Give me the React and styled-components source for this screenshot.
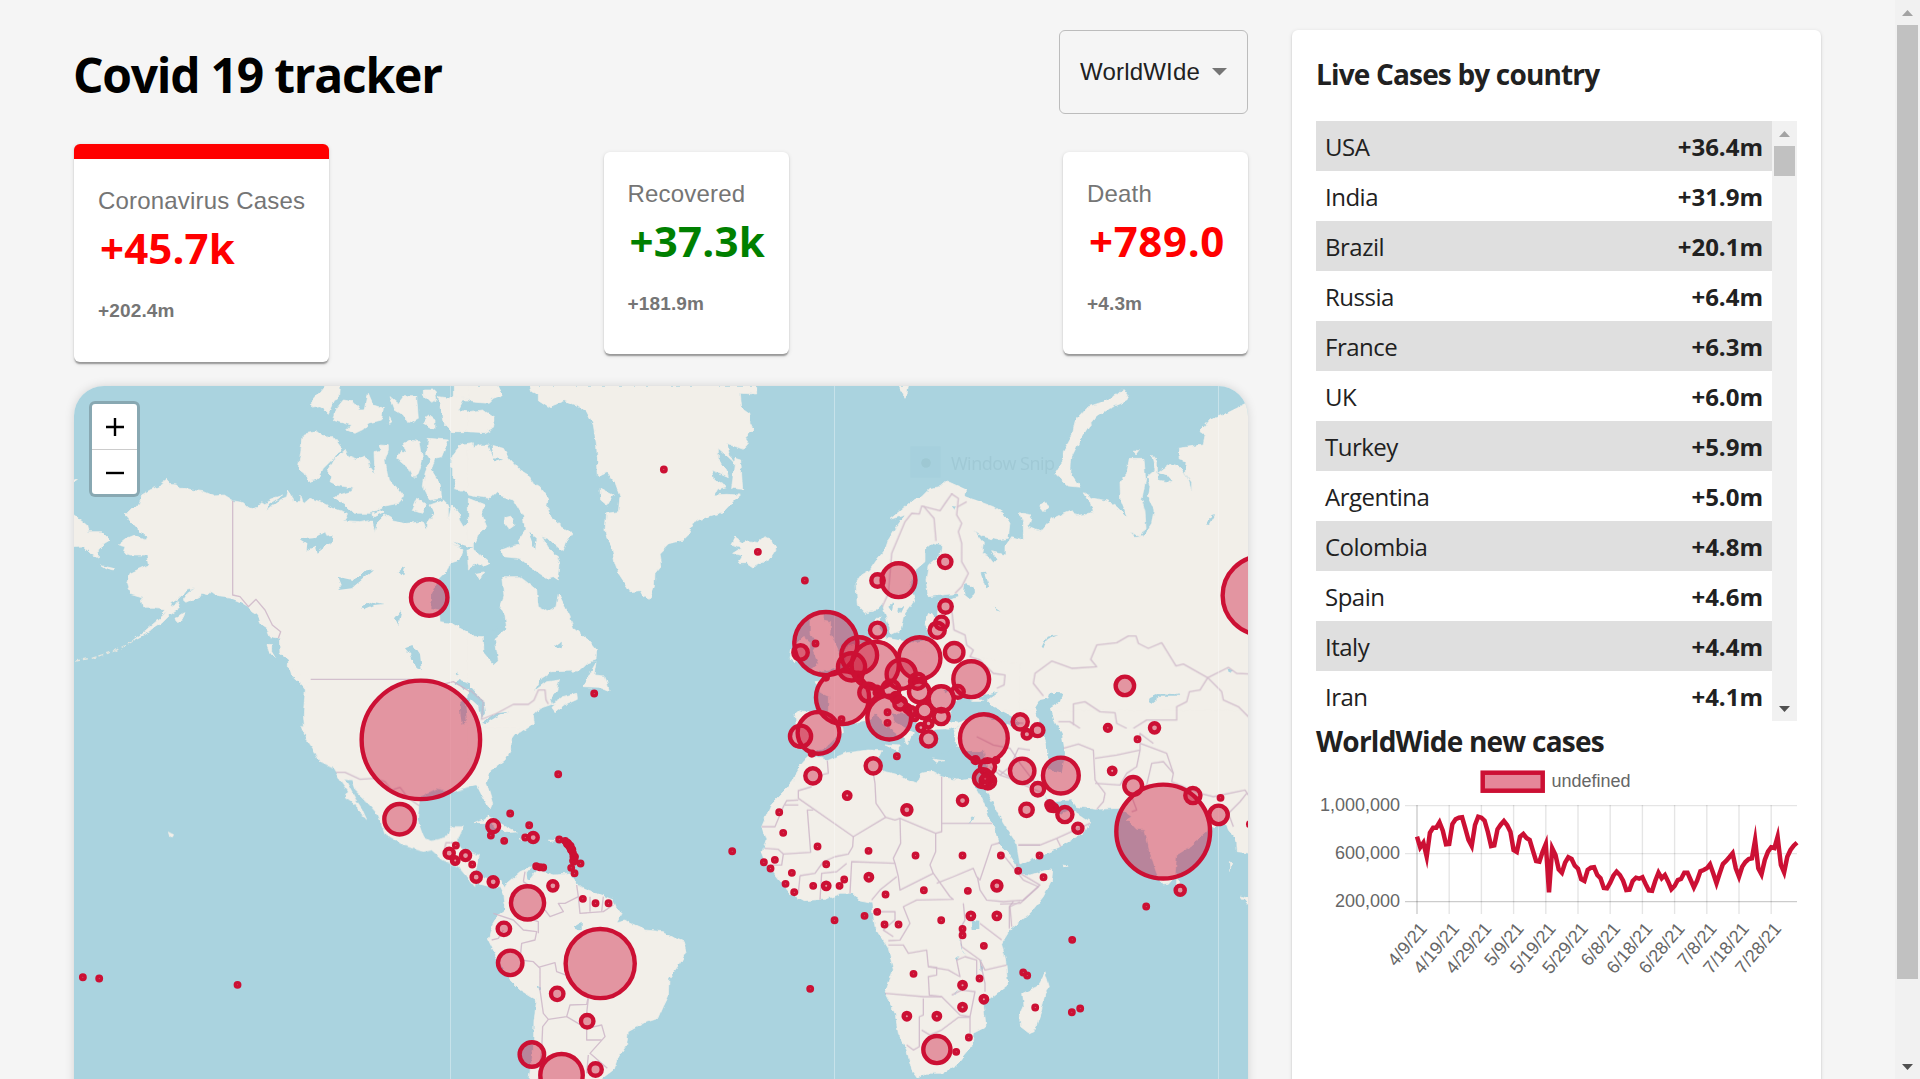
import React from "react";
import styled, { createGlobalStyle } from "styled-components";

const Global = createGlobalStyle`
  * { box-sizing: border-box; }
  html, body { margin: 0; height: 1079px; overflow: hidden; background: #f5f5f5; }
`;
const ui = `"Segoe UI", "Open Sans", "Noto Sans", sans-serif`;
const arial = `"Liberation Sans", Arial, sans-serif`;
const RED = "#cc1034";

const Page = styled.div`
  display: flex; width: 1920px; height: 1079px; overflow: hidden; background: #f5f5f5; font-family: ${ui};
`;
const Content = styled.main`
  flex: 1; display: flex; gap: 44px; padding: 30px 74px 0; align-items: flex-start;
`;
const Left = styled.section`width: 1174px; display: flex; flex-direction: column;`;
const Header = styled.header`display: flex; justify-content: space-between; height: 84px;`;
const Title = styled.h1`
  margin: 13px 0 0 -1px; font-size: 48px; line-height: 64px; font-weight: 700; color: #000; letter-spacing: ${(p) => p.$ls || 0}px; white-space: nowrap;
`;
const Select = styled.button`
  width: 189px; height: 84px; border: 1px solid #bcbcbc; border-radius: 6px; background: transparent;
  padding: 0 20px; display: flex; align-items: center; justify-content: space-between;
  font: 24px/28px ${arial}; color: #212121; letter-spacing: .2px;
`;
const Stats = styled.div`
  display: flex; justify-content: space-between; align-items: center; height: 218px; margin-top: 30px;
`;
const Card = styled.article`
  width: ${(p) => p.$w}px; height: ${(p) => (p.$active ? 218 : 202)}px; background: #fff; border-radius: 6px; padding: 26px 24px 0;
  border-top: ${(p) => (p.$active ? "15px solid #f00" : "0")};
  box-shadow: 0 3px 1.5px -1.5px rgba(0,0,0,.2), 0 1.5px 1.5px rgba(0,0,0,.14), 0 1.5px 4.5px rgba(0,0,0,.12);
`;
const CardLabel = styled.div`font: 24px/32px ${arial}; color: #757575; letter-spacing: .18px; white-space: nowrap;`;
const CardValue = styled.div`
  font-size: 42px; line-height: 56px; font-weight: 700; color: ${(p) => p.$color}; letter-spacing: ${(p) => p.$ls}px; margin: 3px 0 0 2px; white-space: nowrap;
`;
const CardTotal = styled.div`font: 700 19px/28px ${arial}; color: #757575; margin-top: 21px; letter-spacing: .15px;`;
const MapBox = styled.div`
  position: relative; height: 750px; border-radius: 30px; overflow: hidden; background: #aad3df;
`;
const MapShadow = styled.div`border-radius: 30px; box-shadow: 0 0 12px -2px rgba(0,0,0,.2); margin-top: 24px;`;
const ZoomControl = styled.div`
  position: absolute; left: 15px; top: 15px; width: 51px; height: 96px; border: 3px solid rgba(0,0,0,.2); border-radius: 6px;
  background: #fff; background-clip: padding-box; display: flex; flex-direction: column;
`;
const ZoomButton = styled.button`
  flex: 1; border: 0; background: transparent; padding: 2px 0 0; display: grid; place-items: center;
  & + & { border-top: 1px solid #ccc; }
`;
const Sidebar = styled.aside`
  width: 529px; height: 1100px; background: #fff; border-radius: 6px; padding: 24px 24px 0;
  box-shadow: 0 3px 1.5px -1.5px rgba(0,0,0,.2), 0 1.5px 1.5px rgba(0,0,0,.14), 0 1.5px 4.5px rgba(0,0,0,.12);
`;
const SideTitle = styled.h3`
  margin: ${(p) => p.$m}; font-size: 28px; line-height: 40px; font-weight: 700; color: #212121; letter-spacing: ${(p) => p.$ls}px; white-space: nowrap;
`;
const ListFrame = styled.div`display: flex; height: 600px;`;
const Rows = styled.div`flex: 1;`;
const Row = styled.div`
  display: flex; justify-content: space-between; align-items: center; height: 50px; padding: 1px 9px 0; font-size: 24px; line-height: 32px;
  color: #212121; &:nth-child(odd) { background: #dfdfdf; }
`;
const Country = styled.span`letter-spacing: -.5px;`;
const Count = styled.strong`letter-spacing: 0;`;
const Track = styled.div`
  width: 25px; height: ${(p) => p.$h}px; background: #f1f1f1; display: flex; flex-direction: column; align-items: center; flex: none;
`;
const Arrow = styled.div`
  height: 25px; width: 25px; display: grid; place-items: center; margin-top: ${(p) => (p.$down ? "auto" : 0)};
`;
const Thumb = styled.div`width: 21px; height: ${(p) => p.$h}px; background: #c1c1c1;`;
const Chart = styled.svg`display: block; overflow: visible;`;

const Scrollbar = ({ h, thumb }) => (
  <Track $h={h}>
    <Arrow><svg width="11" height="6"><path d="M5.5 0L11 6H0z" fill="#a3a3a3" /></svg></Arrow>
    <Thumb $h={thumb} />
    <Arrow $down><svg width="11" height="6"><path d="M0 0H11L5.5 6z" fill="#505050" /></svg></Arrow>
  </Track>
);

/* Map sheets: each has an origin on the map plane and is drawn at a third of its units. */
const LAND = [
  [70, 380, [
    "165,405 190,380 205,378 215,345 240,330 265,320 275,308 290,298 300,310 320,312 328,325 345,325 365,330 400,335 430,348 460,345 488,362 520,368 535,382 555,388 575,365 590,375 600,358 638,345 600,370 585,392 620,365 650,350 655,330 668,350 672,365 690,368 693,345 700,372 720,355 750,365 790,385 835,400 820,425 870,428 905,420 915,458 920,430 945,405 970,420 1010,430 1060,425 1070,450 1075,425 1095,400 1080,375 1120,360 1135,375 1135,420 1145,375 1165,400 1168,420 1180,440 1210,415 1210,560 1195,555 1190,500 1170,500 1145,488 1180,510 1170,540 1140,550 1130,575 1105,600 1085,640 1083,685 1108,690 1110,725 1145,730 1170,745 1210,765 1210,1060 705,1060 700,1000 706,930 695,905 655,865 655,840 630,820 628,775 600,770 590,745 575,735 560,705 545,695 535,680 510,665 485,655 445,650 425,635 415,645 395,640 385,655 350,670 340,660 360,630 375,622 350,628 330,655 305,670 300,690 270,705 285,690 250,685 222,685 215,650 180,640 170,610 180,580 205,568 235,555 230,525 180,525 160,515 165,500 145,495 170,475 195,465 225,480 230,470 195,440",
    "330,665 322,690 300,705 275,730 250,745 225,762 190,780 210,765 240,740 275,710 300,685", "345,695 340,715 320,728 315,715",
    "0,395 50,435 55,455 95,455 120,480 100,492 85,510 85,535 60,520 40,498 0,500", "95,557 130,565 128,573 108,566",
    "700,162 740,155 775,170 790,170 815,205 790,235 760,265 745,295 718,305 705,280 685,265 692,215",
    "825,210 835,230 860,240 885,228 895,240 900,260 915,280 912,215 935,210 930,195 955,197 955,210 945,240 955,300 980,325 1000,350 985,370 935,380 900,400 850,400 825,375 790,350 840,335 850,325 800,315 780,305 785,290 770,275 790,240",
    "1000,190 1020,180 1050,185 1058,240 1045,280 1030,295 1015,265 980,235 990,215 1010,220", "1075,175 1135,180 1115,230 1095,235 1085,268 1110,310 1115,355 1080,360 1060,320 1065,280 1080,240 1070,225",
    "1210,188 1175,192 1155,215 1145,240 1145,290 1160,310 1150,325 1210,345",
    "765,18 808,18 805,55 790,65 775,100 765,90 750,80 725,85 725,65", "820,60 850,65 870,90 885,90 895,40 910,75 940,85 935,120 895,130 880,148 855,160 830,150 845,135 790,122 800,85",
    "960,50 985,70 1000,50 1040,50 1045,115 1015,130 1000,105 975,90", "1060,30 1095,30 1100,60 1085,70 1060,45", "1075,105 1095,120 1095,150 1060,130", "1105,50 1140,55 1155,45 1210,60 1180,60 1165,90 1210,100 1210,155 1145,155 1120,130", "1150,18 1210,18 1210,60 1150,45",
    "1040,355 1070,375 1055,400 1025,390", "960,112 967,125 955,130", "935,390 945,395 915,410 905,402", "658,860 685,880 705,895 725,925 700,918 665,885", "590,795 605,797 605,815 617,835 600,822",
    "10,295 20,300 10,308"]],
  [470, 380, [
    "-5,210 30,195 60,195 100,205 118,235 150,270 175,285 185,305 210,320 235,355 230,380 245,415 275,440 308,460 290,485 280,515 262,500 250,490 235,475 215,470 240,510 260,525 270,555 265,600 250,590 230,595 180,560 150,535 100,530 95,510 120,500 150,495 145,480 165,450 160,410 130,360 95,350 80,335 60,355 20,350 -5,345",
    "-5,18 85,18 98,45 70,55 55,70 0,65", "-5,95 40,90 75,115 70,145 45,158 -5,155", "-5,355 45,375 35,400 50,440 30,460 20,485 -5,480", "-5,500 20,515 60,550 40,560 20,550 -5,570", "105,410 125,405 132,435 115,447 103,430", "20,580 45,575 30,597",
    "180,18 185,35 205,45 205,62 235,82 285,62 330,80 350,95 370,135 380,200 385,290 410,278 435,310 450,350 445,395 410,400 405,450 412,480 425,500 435,550 450,590 480,635 510,632 520,650 538,658 553,620 555,580 575,555 570,520 600,490 640,480 655,465 668,430 690,418 760,395 808,345 770,343 730,345 740,328 770,320 730,300 725,268 775,290 770,270 745,235 745,205 785,240 810,270 780,230 770,190 820,208 835,190 825,175 850,150 840,130 840,100 812,80 808,40 860,42 860,18",
    "795,235 812,240 818,328 785,325", "390,325 430,345 410,375 392,360", "783,495 795,470 820,488 835,482 865,488 885,470 905,478 918,508 900,535 850,562 830,548 805,548 818,528 788,520 812,505",
    "95,590 150,590 200,630 205,680 232,695 258,680 265,640 300,710 310,745 355,780 380,810 378,840 350,850 325,873 245,875 215,895 190,935 230,905 268,900 260,930 240,955 245,970 280,950 320,940 322,958 285,975 255,998 245,985 255,970 210,985 190,1005 193,1030 150,1060 -5,1060 -5,768 40,770 42,820 70,853 85,840 75,775 110,745 105,705 90,685 102,650",
    "340,920 360,880 378,848 372,885 405,888 418,935 385,922"]],
  [850, 380, [
    "18,610 35,585 60,570 80,540 105,510 115,480 140,440 165,405 120,418 165,380 195,355 215,350 240,325 270,320 290,303 350,330 345,350 375,360 430,380 460,400 480,430 475,475 440,480 395,468 370,450 400,490 395,520 415,530 430,548 440,538 425,515 465,525 465,500 485,470 520,480 520,430 508,398 545,405 535,440 570,455 600,420 640,400 665,390 680,410 705,405 730,395 720,365 700,335 730,355 770,362 800,380 832,412 812,360 810,310 830,280 838,235 882,235 887,300 875,360 885,395 888,440 870,470 840,455 855,472 880,470 905,430 912,390 895,350 900,320 892,290 915,270 905,225 922,245 922,300 970,308 950,285 925,275 960,250 990,260 1015,300 1025,335 1025,310 1005,280 1008,245 988,240 985,205 1060,195 1065,165 1050,155 1080,120 1130,100 1190,70 1210,60 1210,1070 490,1070 490,1000 0,1000 -20,960 -10,800 40,790 65,780 55,740 90,708 88,745 110,775 200,790 245,775 225,735 235,700 262,715 265,665 330,652 322,640 235,650 228,600 235,555 275,520 278,495 250,488 225,510 225,545 190,575 180,620 195,660 165,700 155,750 125,763 110,715 97,670 80,690 45,700 22,675",
    "820,26 835,45 825,65 780,85 740,110 715,140 690,180 665,230 662,280 690,322 655,318 630,295 615,280 640,240 640,215 665,170 675,125 715,80 760,65 800,45", "148,18 175,18 172,40 165,52", "570,380 582,368 595,380 582,395", "850,210 868,212 858,225"]],
  [780, 580, [
    "90,115 130,95 130,120 152,125 150,160 170,200 188,240 175,265 105,278 85,275 115,250 100,215 112,190 90,160", "35,205 70,170 90,185 88,230 45,248 30,235",
    "230,225 200,270 170,270 130,290 145,300 105,305 125,340 148,350 148,395 125,400 60,392 45,405 48,430 35,480 45,505 75,505 95,515 135,505 160,480 175,465 190,455 185,435 220,430 255,425 290,400 310,430 345,455 375,480 380,495 390,470 404,462 345,425 330,395 340,375 370,390 410,430 420,465 440,495 465,495 455,465 470,448 505,448 530,440 550,430 520,450 530,500 560,515 600,515 628,508 622,600 720,600 720,250 300,200"]],
  [740, 730, [
    "215,75 262,92 320,68 385,60 425,62 415,85 422,112 435,125 480,135 505,152 530,162 545,130 575,123 605,140 650,150 690,145 705,170 725,205 745,255 765,300 775,340 805,370 825,400 833,432 870,435 920,420 938,420 935,450 910,500 870,550 810,600 785,640 797,690 803,765 770,790 730,820 738,890 700,910 695,950 650,1005 610,1030 560,1030 535,1045 515,1018 500,960 475,910 465,850 435,790 460,720 445,655 405,590 400,555 395,520 360,513 340,490 300,490 258,508 190,512 150,490 110,440 75,395 65,370 78,330 65,290 95,220 140,175 160,150 170,120 200,85",
    "435,45 480,48 472,62", "578,87 615,92 590,97"]],
  [1000, 730, [
    "-80,-60 750,-60 750,370 712,365 710,330 685,300 675,270 640,290 625,283 620,305 570,350 530,375 525,440 505,463 490,465 470,430 450,370 435,300 410,298 382,268 395,260 360,235 290,238 230,230 215,210 160,215 130,192 150,225 180,255 215,240 232,250 270,275 255,305 180,350 60,405 50,340 10,280 -20,220 -45,175 -55,165 -35,110",
    "135,728 148,770 135,790 125,840 105,900 85,908 62,890 58,860 72,830 68,790 110,770", "530,445 550,468 545,490 530,485", "722,498 745,505 750,530", "688,398 695,396 690,425", "188,405 202,408 192,412"]],
  [70, 730, [
    "695,-10 715,35 735,65 750,95 790,115 810,150 835,185 825,200 860,225 860,240 890,268 875,235 855,205 825,148 845,150 855,180 895,220 925,255 945,310 1000,345 1060,365 1085,360 1120,390 1165,410 1215,470 1215,372 1160,350 1165,325 1180,290 1145,290 1135,320 1085,333 1060,320 1042,270 1050,200 1100,175 1150,185 1210,165 1210,-10",
    "295,306 312,315 300,323"]],
  [470, 730, [
    "-10,-10 150,-10 125,25 122,60 105,90 55,130 50,160 68,220 60,238 40,205 20,165 -10,165",
    "-10,372 28,375 15,430 40,445 60,450 85,440 105,475 100,490 90,470 60,470 20,460 -10,440",
    "98,490 110,460 150,425 185,410 170,430 175,450 200,420 250,435 300,432 330,470 400,498 430,510 440,535 455,550 440,575 465,570 480,580 525,600 580,605 615,625 640,635 648,665 630,700 597,745 595,800 580,830 565,865 520,880 475,905 470,945 440,990 430,1020 390,1050 390,1060 175,1060 190,960 192,870 200,810 150,780 120,750 85,690 55,630 65,590 85,555 105,540",
    "12,278 55,260 100,285 142,306 105,308 60,278", "150,327 175,310 210,325 190,333", "235,330 258,332 240,335"]],
];
const WATER = [
  [70, 380, ["692,478 730,475 765,455 770,470 787,468 785,490 770,495 740,518 735,500 710,512 712,490", "805,590 850,600 885,572 912,568 875,600 845,625 805,630 815,615", "870,685 905,665 945,672 910,675 880,688", "1005,805 1030,795 1050,825 1055,870 1040,865 1022,825", "1150,912 1170,900 1200,910 1200,930 1165,918", "985,575 1005,560 1000,590", "975,715 995,690 985,735", "1180,960 1200,950 1200,965", "1155,880 1165,875 1165,890", "1150,485 1210,505 1190,510", "1168,965 1185,960 1190,1020 1175,1035"]],
  [470, 380, ["0,920 40,965 45,1000 35,1018 28,980 -5,950", "35,1030 80,1000 115,995 80,1010 40,1035", "255,800 275,785 275,805", "65,745 82,740 75,755", "175,455 200,475 195,510", "55,195 65,195 70,235 100,238 75,245", "275,880 300,890 285,893"]],
  [850, 380, ["345,612 375,632 360,655 342,640", "392,580 405,578 418,620 408,625", "430,680 452,695 435,690", "575,800 590,770 625,765 590,780 580,805", "555,985 570,960 595,955 600,938 637,940 630,965 600,985 610,1020 635,1060 645,1120 635,1180 595,1170 590,1090 565,1020", "895,955 925,942 965,945 990,940 980,950 930,950 905,970", "1070,430 1085,408 1095,405 1080,432", "1135,865 1150,873 1140,878", "115,680 130,670 125,695", "145,690 162,675 150,700", "305,378 320,380 315,390"]],
  [780, 580, ["505,420 520,370 560,342 575,365 610,365 590,350 655,335 620,360 640,380 700,410 718,435 690,438 640,418 600,405 555,420 530,428", "490,330 510,330 500,340", "462,450 500,448 520,455 530,505 490,520 470,500", "555,12 580,20 585,40 560,45"]],
  [740, 730, ["692,570 718,572 718,600 695,600", "657,625 668,665 678,678 660,650", "720,690 728,710 722,730", "685,278 705,255 700,270", "645,685 655,678 650,692", "635,795 660,778 648,790"]],
  [470, 730, ["170,432 180,435 180,452 172,448", "200,765 212,775 205,785", "440,990 450,978 448,990", "310,590 335,575 335,600"]],
];
const BORDERS = [
  [70, 380, ["488,362 488,645 510,650 535,680 558,658 585,690 607,735 632,755 625,775", "722,898 1080,898 1110,915 1150,905 1200,935"]],
  [470, 380, ["0,930 40,965 35,1018 80,1000 130,973 175,973 192,960 205,930 225,930 228,960 235,972"]],
  [850, 380, ["97,680 115,640 125,520 165,425 185,400 208,402 215,378 270,392 285,370 305,342 325,355 320,405 335,430 325,455 335,490 335,545 355,580 335,620 315,640", "220,378 252,415 258,483", "320,382 350,365", "305,690 312,750 345,765 350,795 370,810 360,830 390,840 430,880 465,885 462,915 440,925", "580,948 550,910 555,880 605,843 665,865 740,860 722,838 740,795 800,788 835,768 858,768 865,790 895,805 935,788 978,858 1000,852 1073,893 1050,930 1018,935 1010,965 980,980 980,1020 890,1020 850,1045", "1073,893 1135,862 1160,880 1200,882", "1073,893 1115,935 1120,960 1165,980 1200,1015", "670,1035 670,972 705,965 750,995 795,998 800,1030 830,1045", "625,1025 660,1025 690,1045", "470,1025 520,1030"]],
  [740, 730, ["262,92 265,130 240,135 M215,170 175,182 175,205 340,320 437,262 408,220 405,160 400,130", "175,210 140,212 130,230 105,290 65,290", "175,225 135,225", "220,240 202,240 212,367 130,372 115,358 75,355", "340,320 338,350 325,372 285,380 250,395 225,430 180,437", "437,262 465,270 480,265 587,310 605,305 605,140", "605,280 757,280", "480,265 482,340 460,385 465,400 335,395 330,490", "587,310 587,365 570,405 580,430 630,500 640,508 530,510 490,530 510,580 480,630 445,632", "465,400 475,440 480,480 580,430", "590,460 640,440 700,415 710,440 720,450 755,345 780,338", "712,440 720,480 740,510 790,515 850,510 900,465 840,430 830,400", "808,595 808,530 820,515", "720,580 785,630", "670,520 675,570 658,600 665,650 720,690 735,720 800,705", "130,372 125,405 90,405", "180,437 175,490", "240,510 245,430 290,425 320,400", "395,510 420,480 470,440", "410,545 465,545 465,570 430,600 460,620", "445,645 490,645 505,670 560,660 565,710 590,712 590,735 565,740 568,795 605,800 660,855 690,860 705,785 665,780 635,795", "435,790 550,800 605,800", "550,805 550,855 538,860 538,950 520,960 500,945", "545,900 570,915 605,900 655,862 690,862 690,910", "565,710 625,720 660,740 650,690 675,680 710,690 710,750", "780,135 810,110 835,55 870,60", "750,110 780,135 870,165", "835,345 900,345", "720,690 735,760 735,785"]],
  [1000, 730, ["55,345 120,345 170,325 270,280", "-70,20 -20,45 30,55 60,100 110,165", "-5,120 60,160 130,190", "190,55 235,42 280,60 285,150 315,190 310,215 290,238", "285,85 350,75 420,60 420,10 460,40", "285,160 360,165 380,130 410,110 420,60", "395,245 410,240 395,200 440,165 455,100 490,95 520,130 515,155 600,190 640,200 735,180 745,195", "700,290 685,250 720,215 740,190", "420,40 500,70 520,130", "170,325 182,350", "10,375 70,450 115,470 60,520 0,522", "35,590 30,530 60,515"]],
  [70, 730, ["798,127 825,127 870,148 915,145 945,155 965,180 990,172 1015,205 1048,227", "1120,375 1128,338 1150,338"]],
  [470, 730, ["160,455 165,425 M160,455 205,485 M320,465 325,500 285,520 265,520 280,545 240,560 225,540", "325,500 330,550 400,545 430,525", "360,500 360,545", "400,500 395,545", "70,550 130,570 160,600 200,605 195,630 155,640 150,690 190,695 210,715 210,780 220,850 235,868 290,860 300,825 350,823 355,800 320,780 300,740 260,725 255,698 205,712", "175,565 205,575 205,610", "235,868 218,890 215,960 205,1050", "290,860 350,895 395,885 405,920 360,970 412,1015", "350,895 350,930 395,930", "355,805 350,850", "355,975 350,1030", "65,630 85,625 100,600"]],
];
/* Case bubbles: x, y and outer size in sheet units; size defaults to the smallest dot. */
const BUBBLES = [
  [70, 380, [[1077, 652, 61], [1052, 1079, 184]]],
  [70, 730, [[988, 267, 52], [38, 741], [87, 745], [502, 764], [1137, 369, 20], [1157, 346], [1155, 391, 16], [1186, 376, 20]]],
  [470, 380, [[581, 268], [863, 515], [1004, 601], [372, 940], [1067, 790, 101], [1036, 790], [991, 817, 28]]],
  [470, 730, [[264, 132], [120, 250], [69, 288, 24], [62, 316], [102, 332], [177, 285], [165, 322], [189, 322, 20], [267, 328], [285, 332], [292, 340, 14], [299, 348, 14], [304, 358, 14], [308, 368], [312, 380, 14], [311, 392, 14], [331, 400], [303, 413], [313, 429], [198, 408], [209, 411], [219, 412], [6, 403], [18, 441, 20], [69, 455, 20], [172, 518, 56], [248, 467, 20], [338, 506], [376, 519], [415, 519], [101, 596, 25], [120, 698, 43], [390, 700, 110], [261, 791, 25], [351, 873, 25], [185, 973, 43], [274, 1035, 70], [376, 1018, 25], [786, 363], [1020, 776], [1093, 570]]],
  [740, 730, [[218, 137, 29], [399, 107, 29], [470, 78], [321, 196, 16], [500, 239, 20], [667, 211, 20], [117, 246], [129, 308], [232, 349], [385, 362], [526, 376], [667, 376], [782, 376], [71, 396], [104, 389], [91, 415], [155, 428], [258, 402], [136, 461], [162, 486], [219, 467], [258, 467, 16], [298, 467], [312, 448], [386, 441, 16], [436, 493], [551, 480], [683, 482], [770, 467, 20], [834, 422], [373, 557], [411, 545], [433, 583], [475, 583], [603, 570], [692, 557, 16], [770, 557, 16], [667, 596], [667, 615], [731, 647], [520, 731], [718, 745], [667, 765, 16], [731, 807, 16], [667, 831, 16], [590, 858, 16], [500, 858, 16], [686, 922], [648, 965], [590, 958, 47], [849, 727], [861, 736], [885, 832], [565, 26, 29], [706, 90, 15], [742, 110, 29], [728, 144, 33], [743, 153, 28], [735, 146, 16], [768, 90, 12], [846, 122, 43], [893, 177, 25], [859, 239, 25]]],
  [1000, 730, [[182, 136, 60], [336, 122, 16], [399, 167, 33], [489, 304, 147], [578, 196, 29], [661, 203], [655, 254, 34], [749, 282], [540, 480, 20], [438, 529], [118, 376], [130, 441], [216, 629], [215, 846], [240, 835], [149, 224, 17], [153, 230, 18], [161, 233, 16], [194, 253, 29], [233, 294, 20], [412, 27], [80, 12, 19], [112, 0, 24]]],
  [850, 380, [[285, 545, 25], [82, 601, 25], [145, 600, 57], [286, 679, 25], [274, 728, 25], [261, 750, 29], [82, 750, 29], [208, 834, 69], [312, 816, 34], [363, 897, 60], [323, 935, 24], [824, 917, 34], [773, 1043, 15], [913, 1043, 20], [1235, 646, 124], [510, 1025, 29]]],
  [780, 580, [[611, 474, 78], [327, 412, 72], [187, 352, 86], [115, 458, 69], [61, 468, 38], [237, 225, 60], [214, 260, 47], [285, 255, 77], [235, 288, 17], [264, 337, 33], [292, 337, 15], [363, 282, 50], [332, 327, 32], [347, 352, 20], [360, 370, 24], [417, 335, 37], [412, 303, 29], [382, 385, 16], [433, 391, 30], [483, 356, 44], [483, 409, 29], [422, 442, 17], [445, 430, 18], [404, 412, 14], [394, 393, 18], [322, 396], [322, 428], [184, 417], [137, 292, 12], [95, 520, 12], [290, 325, 12]]],
];

const Layer = ({ data, ...rest }) => data.map(([x, y, shapes]) => (
  <g key={x + "-" + y} transform={`translate(${x} ${y}) scale(.33333)`} {...rest}>
    {shapes.map((p, i) => <path key={i} d={"M" + p + (rest.fill === "none" ? "" : "Z")} />)}
  </g>
));

const WorldMap = () => (
  <svg width="1174" height="750" viewBox="74 386 1174 750" style={{ display: "block" }}>
    <defs>
      <filter id="coast" filterUnits="userSpaceOnUse" x="60" y="370" width="1200" height="770">
        <feTurbulence type="fractalNoise" baseFrequency=".16" numOctaves="2" seed="4" />
        <feDisplacementMap in="SourceGraphic" scale="4.5" xChannelSelector="R" yChannelSelector="G" />
      </filter>
    </defs>
    <g filter="url(#coast)">
      <Layer data={LAND} fill="#f2efe9" stroke="#f2efe9" strokeWidth="2" />
      <Layer data={WATER} fill="#aad3df" />
      <path d="M75 661 L92 658 L115 651 L135 640" stroke="#e3e6e0" strokeWidth="1.4" strokeDasharray="5 3" fill="none" />
    </g>
    <Layer data={BORDERS} fill="none" stroke="#cbb3c6" strokeWidth="4" strokeLinejoin="round" opacity=".8" />
    {[450.5, 834.5, 1218.5].map((x) => <path key={x} d={`M${x} 386V1140`} stroke="#fff" strokeOpacity=".35" />)}
    <rect x="910.5" y="446.5" width="30" height="31" fill="#a3cfdc" opacity=".6" />
    <circle cx="926" cy="463" r="4.8" fill="#9ec8d3" />
    <text x="951" y="470" fontFamily={ui} fontSize="18" fontWeight="400" fill="#a0c9d5" textLength="104">Window Snip</text>
    {BUBBLES.map(([ox, oy, list]) => list.map(([x, y, r = 11.5], i) => (
      <circle key={ox + "-" + oy + "-" + i} cx={ox + x / 3 + 0.2} cy={oy + y / 3 + 0.2} r={r / 3 - 2.1} fill={RED} fillOpacity=".4" stroke={RED} strokeWidth="4.4" />
    )))}
  </svg>
);

const SERIES = [530,562,548,590,518,503,503,487,512,553,552,492,478,473,472,505,540,558,495,470,473,482,515,558,556,508,494,483,496,515,570,576,530,522,534,540,572,603,605,575,552,697,565,585,628,638,608,592,597,617,626,658,663,630,623,622,645,655,684,685,668,647,635,645,662,690,689,663,653,656,652,672,691,692,662,638,655,645,665,688,678,660,657,638,638,660,682,662,634,630,625,613,640,670,640,612,603,592,580,625,650,620,606,597,595,540,625,643,600,575,562,564,530,615,637,590,570,557,548];
const DATES = ["4/9/21", "4/19/21", "4/29/21", "5/9/21", "5/19/21", "5/29/21", "6/8/21", "6/18/21", "6/28/21", "7/8/21", "7/18/21", "7/28/21"];
const step = 32.2;
const NewCases = () => (
  <Chart width="481" height="240" viewBox="1316 760 481 240" fontFamily={arial} fontSize="18" fill="#666">
    <rect x="1482.7" y="772.7" width="60" height="18" fill={RED} fillOpacity=".5" stroke={RED} strokeWidth="4.5" />
    <text x="1551.5" y="787">undefined</text>
    {["1,000,000", "600,000", "200,000"].map((t, i) => (
      <g key={t}>
        <text x="1400" y={811 + i * 48} textAnchor="end">{t}</text>
        <path d={`M1405 ${805.6 + i * 48}H1797`} stroke="#000" strokeOpacity={i === 2 ? 0.2 : 0.1} strokeWidth="1.4" />
      </g>
    ))}
    {DATES.map((t, i) => {
      const x = 1417 + i * step;
      return (
        <g key={t}>
          <path d={`M${x} 805V914`} stroke="#000" strokeOpacity={i ? 0.1 : 0.2} strokeWidth="1.4" />
          <text transform={`translate(${x + 11} 929) rotate(-50)`} textAnchor="end">{t}</text>
        </g>
      );
    })}
    <polyline points={SERIES.map((v, i) => `${(1417 + i * 3.22).toFixed(1)},${(660 + v / 3).toFixed(1)}`).join(" ")} fill="none" stroke={RED} strokeWidth="4.5" strokeLinejoin="miter" strokeMiterlimit="10" />
  </Chart>
);

const COUNTRIES = [["USA", "36.4"], ["India", "31.9"], ["Brazil", "20.1"], ["Russia", "6.4"], ["France", "6.3"], ["UK", "6.0"], ["Turkey", "5.9"], ["Argentina", "5.0"], ["Colombia", "4.8"], ["Spain", "4.6"], ["Italy", "4.4"], ["Iran", "4.1"]];

const Stat = ({ label, value, total, color, w, active, ls }) => (
  <Card $w={w} $active={active}>
    <CardLabel>{label}</CardLabel>
    <CardValue $color={color} $ls={ls}>{value}</CardValue>
    <CardTotal>{total}</CardTotal>
  </Card>
);

export default function App() {
  return (
    <Page>
      <Global />
      <Content>
        <Left>
          <Header>
            <Title $ls={-1.25}>Covid 19 tracker</Title>
            <Select>WorldWIde<svg width="15" height="8"><path d="M0 0H15L7.5 7.5z" fill="#757575" /></svg></Select>
          </Header>
          <Stats>
            <Stat w={255} active label="Coronavirus Cases" value="+45.7k" total="+202.4m" color="#f00" ls={0.15} />
            <Stat w={185} label="Recovered" value="+37.3k" total="+181.9m" color="#008000" ls={0.25} />
            <Stat w={185} label="Death" value="+789.0" total="+4.3m" color="#f00" ls={0.65} />
          </Stats>
          <MapShadow>
            <MapBox>
              <WorldMap />
              <ZoomControl>
                <ZoomButton><svg width="18" height="18"><path d="M0 9H18M9 0V18" stroke="#000" strokeWidth="2.4" /></svg></ZoomButton>
                <ZoomButton><svg width="18" height="18"><path d="M0 9H18" stroke="#000" strokeWidth="2.4" /></svg></ZoomButton>
              </ZoomControl>
            </MapBox>
          </MapShadow>
        </Left>
        <Sidebar>
          <SideTitle $m="0 0 27px" $ls={-0.83}>Live Cases by country</SideTitle>
          <ListFrame>
            <Rows>
              {COUNTRIES.map(([name, n]) => (
                <Row key={name}><Country>{name}</Country><Count>+{n}m</Count></Row>
              ))}
            </Rows>
            <Scrollbar h={600} thumb={30} />
          </ListFrame>
          <SideTitle $m="0 0 -1px" $ls={-0.76}>WorldWide new cases</SideTitle>
          <NewCases />
        </Sidebar>
      </Content>
      <Scrollbar h={1079} thumb={954} />
    </Page>
  );
}
